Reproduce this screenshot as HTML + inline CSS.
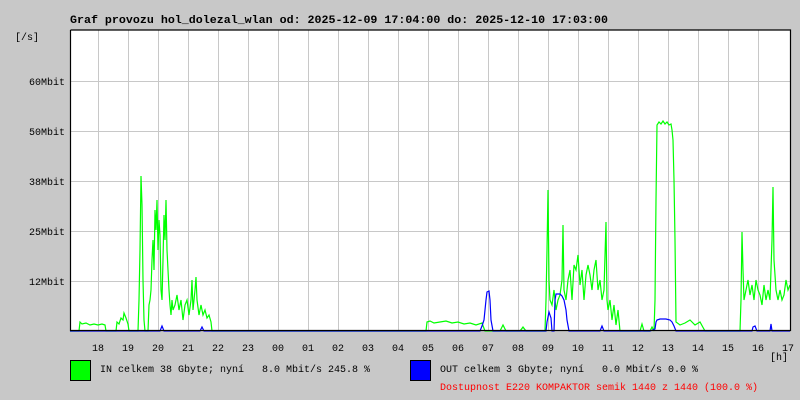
<!DOCTYPE html>
<html><head><meta charset="utf-8"><style>
html,body{margin:0;padding:0;background:#c8c8c8;}
body{width:800px;height:400px;position:relative;overflow:hidden;font-family:"Liberation Mono","DejaVu Sans Mono",monospace;}
</style></head><body>
<svg width="800" height="400" xmlns="http://www.w3.org/2000/svg" style="position:absolute;left:0;top:0" font-family="Liberation Mono, DejaVu Sans Mono, monospace">
<rect x="70" y="30" width="720" height="300" fill="#fff"/>
<g stroke="#c8c8c8" stroke-width="1">
<path d="M98.5 30V330M128.5 30V330M158.5 30V330M188.5 30V330M218.5 30V330M248.5 30V330M278.5 30V330M308.5 30V330M338.5 30V330M368.5 30V330M398.5 30V330M428.5 30V330M458.5 30V330M488.5 30V330M518.5 30V330M548.5 30V330M578.5 30V330M608.5 30V330M638.5 30V330M668.5 30V330M698.5 30V330M728.5 30V330M758.5 30V330"/>
<path d="M70 81.5H790M70 131.5H790M70 181.5H790M70 231.5H790M70 281.5H790"/>
</g>
<polyline fill="none" stroke="#00ff00" stroke-width="1.2" points="70,331 79,331 80,322 82,324 86,323 90,325 94,324 98,325 102,324 105,325 106,331 116,331 117,322 119,324 121,318 123,320 124,313 126,318 128,324 129,331 138,331 139,300 140,250 141,176 142,205 143,280 144,320 145,331 148,331 149,305 150,300 151,290 152,260 153,240 154,270 155,210 156,230 157,200 158,250 159,220 160,235 161,290 162,300 163,260 164,215 165,240 166,200 167,250 168,270 169,290 170,305 171,315 172,300 173,310 175,305 177,295 179,310 181,300 183,320 185,305 187,300 189,315 191,300 192,280 193,310 195,290 196,277 197,300 199,315 201,305 203,315 205,310 207,318 209,315 211,322 212,331 426,331 427,322 430,321 434,323 440,322 446,321 452,323 458,322 464,324 470,323 476,325 482,323 485,331 500,331 503,325 506,331 520,331 523,327 526,331 545,331 546,300 547,250 548,190 549,280 550,300 552,305 554,290 556,310 558,300 560,295 562,280 563,225 564,290 566,300 568,280 570,270 572,300 574,265 576,270 578,255 580,285 582,270 584,300 586,275 588,265 590,275 592,290 594,270 596,260 598,290 600,280 602,300 604,290 606,222 607,300 608,310 610,300 612,320 614,305 616,325 618,310 620,331 640,331 642,324 644,331 650,331 652,327 654,331 655,300 656,200 657,125 659,122 661,124 663,121 665,124 667,122 669,125 671,124 672,130 673,140 674,180 675,240 676,322 680,325 685,323 690,320 695,325 700,322 705,331 740,331 741,300 742,232 743,270 744,300 746,290 748,280 750,295 752,285 754,300 756,280 758,290 760,295 762,305 764,285 766,300 768,290 770,300 772,240 773,187 774,260 776,290 778,300 780,290 782,300 784,295 786,280 788,290 790,285"/>
<polyline fill="none" stroke="#0000ff" stroke-width="1.2" points="70,331 160,331 162,326 164,331 200,331 202,327 204,331 480,331 482,326 484,320 486,300 487,292 489,291 490,300 491,320 493,331 546,331 547,322 549,312 551,318 552,331 554,331 555,300 556,294 560,294 562,296 564,300 566,310 567,320 569,331 600,331 602,326 604,331 650,331 655,329 656,322 657,320 660,319 666,319 670,320 672,322 674,326 676,331 752,331 753,327 755,326 757,331 770,331 771,324 772,331 790,331"/>
<path d="M70.5 30V330.5H790.5V30H70.5" fill="none" stroke="#000" stroke-width="1.2"/>
<g font-size="10" fill="#000">
<text x="15" y="40">[/s]</text>
<text x="65" y="85" text-anchor="end">60Mbit</text>
<text x="65" y="135" text-anchor="end">50Mbit</text>
<text x="65" y="185" text-anchor="end">38Mbit</text>
<text x="65" y="235" text-anchor="end">25Mbit</text>
<text x="65" y="285" text-anchor="end">12Mbit</text>
<g text-anchor="middle">
<text x="98" y="351">18</text><text x="128" y="351">19</text><text x="158" y="351">20</text><text x="188" y="351">21</text><text x="218" y="351">22</text><text x="248" y="351">23</text><text x="278" y="351">00</text><text x="308" y="351">01</text><text x="338" y="351">02</text><text x="368" y="351">03</text><text x="398" y="351">04</text><text x="428" y="351">05</text><text x="458" y="351">06</text><text x="488" y="351">07</text><text x="518" y="351">08</text><text x="548" y="351">09</text><text x="578" y="351">10</text><text x="608" y="351">11</text><text x="638" y="351">12</text><text x="668" y="351">13</text><text x="698" y="351">14</text><text x="728" y="351">15</text><text x="758" y="351">16</text><text x="788" y="351">17</text>
</g>
<text x="770" y="360">[h]</text>
<text x="100" y="372" textLength="270" lengthAdjust="spacingAndGlyphs">IN celkem 38 Gbyte; nyní &#160;&#160;8.0 Mbit/s 245.8 %</text>
<text x="440" y="372" textLength="258" lengthAdjust="spacingAndGlyphs">OUT celkem 3 Gbyte; nyní &#160;&#160;0.0 Mbit/s 0.0 %</text>
<text x="440" y="390" fill="#ff0000" textLength="318" lengthAdjust="spacingAndGlyphs">Dostupnost E220 KOMPAKTOR semik 1440 z 1440 (100.0 %)</text>
</g>
<text x="70" y="23" font-size="11.3" font-weight="bold" textLength="538" lengthAdjust="spacingAndGlyphs">Graf provozu hol_dolezal_wlan od: 2025-12-09 17:04:00 do: 2025-12-10 17:03:00</text>
<rect x="70.5" y="360.5" width="20" height="20" fill="#00ff00" stroke="#000"/>
<rect x="410.5" y="360.5" width="20" height="20" fill="#0000ff" stroke="#000"/>
</svg>
</body></html>
